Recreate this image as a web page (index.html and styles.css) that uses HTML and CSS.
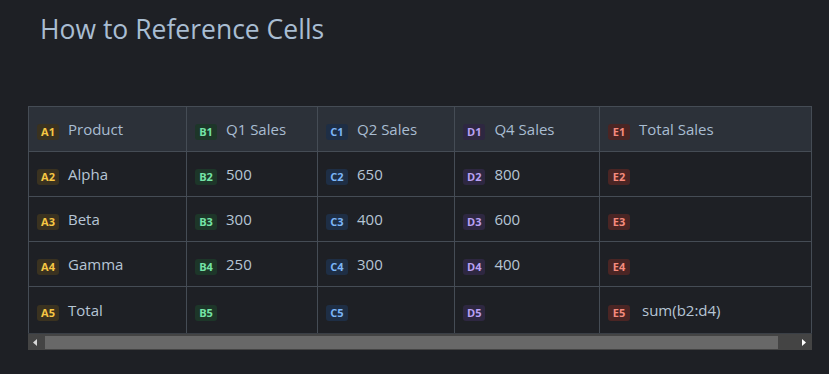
FILE: index.html
```html
<!DOCTYPE html>
<html>
<head>
<meta charset="utf-8">
<link rel="stylesheet" href="styles.css">
</head>
<body>
<h1 class="title">How to Reference Cells</h1>
<div class="scroller">
  <div class="viewport">
    <table class="sheet">
      <colgroup>
        <col class="c-a"><col class="c-b"><col class="c-c"><col class="c-d"><col class="c-e">
      </colgroup>
      <thead>
        <tr>
          <th><span class="tag a">A1</span>Product</th>
          <th><span class="tag b">B1</span>Q1 Sales</th>
          <th><span class="tag c">C1</span>Q2 Sales</th>
          <th><span class="tag d">D1</span>Q4 Sales</th>
          <th><span class="tag e">E1</span>Total Sales</th>
        </tr>
      </thead>
      <tbody>
        <tr>
          <td><span class="tag a">A2</span>Alpha</td>
          <td><span class="tag b">B2</span>500</td>
          <td><span class="tag c">C2</span>650</td>
          <td><span class="tag d">D2</span>800</td>
          <td><span class="tag e">E2</span></td>
        </tr>
        <tr>
          <td><span class="tag a">A3</span>Beta</td>
          <td><span class="tag b">B3</span>300</td>
          <td><span class="tag c">C3</span>400</td>
          <td><span class="tag d">D3</span>600</td>
          <td><span class="tag e">E3</span></td>
        </tr>
        <tr>
          <td><span class="tag a">A4</span>Gamma</td>
          <td><span class="tag b">B4</span>250</td>
          <td><span class="tag c">C4</span>300</td>
          <td><span class="tag d">D4</span>400</td>
          <td><span class="tag e">E4</span></td>
        </tr>
        <tr class="last">
          <td><span class="tag a">A5</span>Total</td>
          <td><span class="tag b">B5</span></td>
          <td><span class="tag c">C5</span></td>
          <td><span class="tag d">D5</span></td>
          <td><span class="tag e">E5</span><span class="formula">sum(b2:d4)</span></td>
        </tr>
      </tbody>
    </table>
  </div>
  <div class="hscroll">
    <div class="sbtn left"><svg width="17" height="17" viewBox="0 0 17 17"><path d="M9 5 L5 8.5 L9 12 Z" fill="#d8d8d8"/></svg></div>
    <div class="track"><div class="thumb"></div></div>
    <div class="sbtn right"><svg width="17" height="17" viewBox="0 0 17 17"><path d="M7 5 L11 8.5 L7 12 Z" fill="#ffffff"/></svg></div>
  </div>
</div>
</body>
</html>
```
FILE: styles.css
```css
html, body {
  margin: 0;
  padding: 0;
  background: #1e2025;
}
body {
  font-family: "Open Sans", "Noto Sans", sans-serif;
  color: #b6c5d5;
  padding: 0 0 0 28px;
}
.title {
  margin: 0;
  padding: 11px 0 0 12px;
  height: 106px;
  box-sizing: border-box;
  font-size: 26.5px;
  line-height: 36px;
  font-weight: 400;
  color: #a9bdd2;
}
.scroller {
  width: 784px;
}
.viewport {
  overflow: hidden;
  border-right: 1px solid #454c55;
}
.sheet {
  border-collapse: collapse;
  table-layout: fixed;
  width: 783px;
  font-size: 15px;
}
.c-a { width: 158px; }
.c-b { width: 131px; }
.c-c { width: 137px; }
.c-d { width: 145px; }
.c-e { width: 212px; }
.sheet th, .sheet td {
  border: 1px solid #454c55;
  height: 44px;
  padding: 0 0 0 8px;
  text-align: left;
  font-weight: 400;
  white-space: nowrap;
  vertical-align: middle;
}
.sheet th:last-child, .sheet td:last-child { border-right: none; }
.sheet tr.last td { height: 46px; border-bottom: none; }
.sheet thead th {
  background: #2c3139;
  color: #a9bdd2;
}
.tag {
  display: inline-block;
  min-width: 22px;
  height: 16px;
  line-height: 16px;
  box-sizing: border-box;
  padding: 0 4px;
  margin-right: 9px;
  border-radius: 3px;
  font-size: 11px;
  font-weight: 700;
  text-align: center;
  vertical-align: -1px;
}
.tag.a { background: #3a3220; color: #f6c744; }
.tag.b { background: #1d3629; color: #74e3a5; }
.tag.c { background: #1e2e45; color: #7cb5f7; }
.tag.d { background: #2e2741; color: #b9a0f4; }
.tag.e { background: #4a2524; color: #f58b7d; }
.formula { margin-left: 3px; }
.hscroll {
  display: flex;
  height: 17px;
  background: #444444;
  border-top: 1px solid #3a3f46;
  box-sizing: border-box;
}
.sbtn {
  width: 17px;
  height: 17px;
  flex: none;
}
.sbtn svg { display: block; }
.track {
  flex: 1;
  padding: 2px 0;
  box-sizing: border-box;
}
.thumb {
  width: 733px;
  height: 13px;
  background: #686868;
}
```
